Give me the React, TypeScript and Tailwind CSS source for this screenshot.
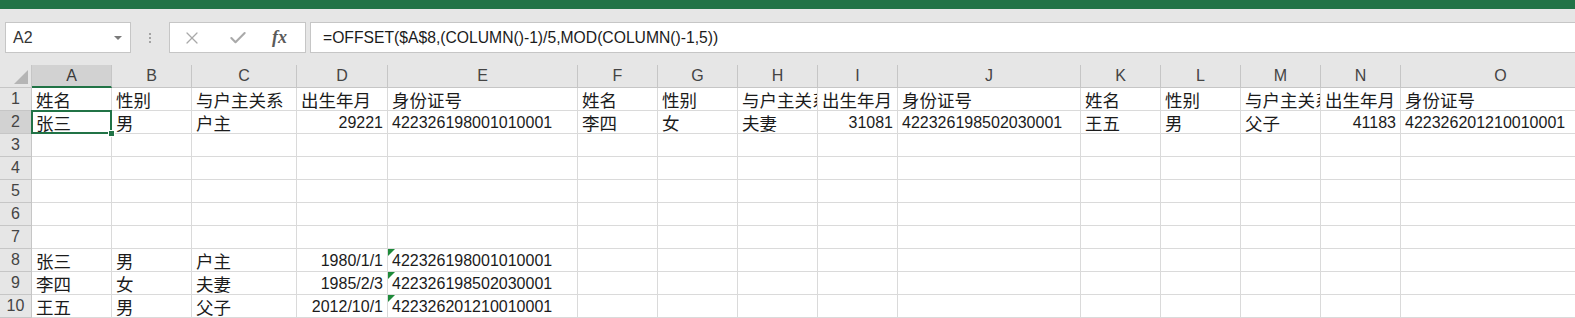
import { X, Check } from 'lucide-react';

const colNames = ['A', 'B', 'C', 'D', 'E', 'F', 'G', 'H', 'I', 'J', 'K', 'L', 'M', 'N', 'O'];

const head = ['姓名', '性别', '与户主关系', '出生年月', '身份证号'];

const rows: string[][] = [
    [...head, ...head, ...head],
    ['张三', '男', '户主', '29221', '422326198001010001', '李四', '女', '夫妻', '31081', '422326198502030001', '王五', '男', '父子', '41183', '422326201210010001'],
    [],
    [],
    [],
    [],
    [],
    ['张三', '男', '户主', '1980/1/1', '422326198001010001'],
    ['李四', '女', '夫妻', '1985/2/3', '422326198502030001'],
    ['王五', '男', '父子', '2012/10/1', '422326201210010001'],
];

// date / serial columns are right aligned
const rightCols = [3, 8, 13];

function Cell({ text, col, row }: { text: string; col: number; row: number }) {
    const isNum = /^[0-9/]+$/.test(text);
    const right = isNum && rightCols.includes(col);
    const selected = row === 1 && col === 0;
    const flag = row >= 7 && col === 4 && text !== '';
    return (
        <div
            className={`relative flex h-[23px] items-center border-r border-b border-[#dadada] bg-white pl-[4px] ${
                right ? 'justify-end pr-[4px]' : 'justify-start'
            } ${selected ? 'overflow-visible' : 'overflow-hidden'}`}
        >
            <span
                className={`whitespace-nowrap text-[#1b1b1b] ${
                    isNum
                        ? "font-['Liberation_Sans',sans-serif] text-[16px] leading-[23px]"
                        : "font-['Noto_Sans_CJK_SC',sans-serif] text-[17.5px] leading-[23px]"
                }`}
            >
                {text}
            </span>
            {flag && (
                <span className="absolute top-0 left-0 h-0 w-0 border-t-[7px] border-r-[7px] border-t-[#1e8a3a] border-r-transparent" />
            )}
            {selected && (
                <>
                    <span className="pointer-events-none absolute top-[-1px] left-[-1px] right-[-1px] bottom-[-1px] z-10 border-2 border-[#217346]" />
                    <span className="absolute right-[-4px] bottom-[-4px] z-20 h-[7px] w-[7px] border border-white bg-[#217346]" />
                </>
            )}
        </div>
    );
}

export default function App() {
    return (
        <div className="h-[318px] w-[1575px] overflow-hidden bg-white">
            <div className="h-[9px] bg-[#217346]" />
            <div className="flex h-[56px] items-start gap-0 bg-[#e6e6e6] pt-[13px]">
                <div className="ml-[5px] flex h-[31px] w-[126px] items-center justify-between border border-[#c6c6c6] bg-white pr-[8px] pl-[7px]">
                    <span className="font-['Liberation_Sans',sans-serif] text-[16px] text-[#333]">A2</span>
                    <span className="h-0 w-0 border-t-[4px] border-r-[4px] border-l-[4px] border-t-[#7a7a7a] border-r-transparent border-l-transparent" />
                </div>
                <div className="flex h-[31px] w-[38px] flex-col items-center justify-center gap-[2px]">
                    <span className="h-[2px] w-[2px] bg-[#a3a3a3]" />
                    <span className="h-[2px] w-[2px] bg-[#a3a3a3]" />
                    <span className="h-[2px] w-[2px] bg-[#a3a3a3]" />
                </div>
                <div className="flex h-[31px] w-[137px] items-center border border-[#c6c6c6] bg-white">
                    <X className="ml-[12px] h-[20px] w-[20px] text-[#a9a9a9]" strokeWidth={1.5} />
                    <Check className="ml-[26px] h-[20px] w-[20px] text-[#a9a9a9]" strokeWidth={2.5} />
                    <span className="ml-[24px] font-['Liberation_Serif',serif] text-[18px] font-bold italic text-[#5a5a5a]">fx</span>
                </div>
                <div className="ml-[4px] flex h-[31px] flex-1 items-center border-y border-l border-[#c6c6c6] bg-white pl-[12px]">
                    <span className="font-['Liberation_Sans',sans-serif] text-[15.7px] text-[#1b1b1b]">
                        =OFFSET($A$8,(COLUMN()-1)/5,MOD(COLUMN()-1,5))
                    </span>
                </div>
            </div>
            <div className="grid grid-cols-[32px_80px_80px_105px_91px_190px_80px_80px_80px_80px_183px_80px_80px_80px_80px_200px]">
                {/* corner */}
                <div className="relative h-[23px] border-r border-b border-[#c6c6c6] bg-[#e6e6e6]">
                    <svg className="absolute right-[3px] bottom-[3px]" width="14" height="14" viewBox="0 0 14 14">
                        <polygon points="14,0 14,14 0,14" fill="#b5b5b5" />
                    </svg>
                </div>
                {colNames.map((c, i) => (
                    <div
                        key={c}
                        className={`flex h-[23px] items-center justify-center border-r font-['Liberation_Sans',sans-serif] text-[16px] ${
                            i === 0
                                ? 'border-b-2 border-r-[#c6c6c6] border-b-[#217346] bg-[#d2d2d2] text-[#3a3a3a]'
                                : 'border-b border-[#c6c6c6] bg-[#e6e6e6] text-[#444]'
                        }`}
                    >
                        {c}
                    </div>
                ))}
                {rows.map((r, ri) => (
                    <Row key={ri} cells={r} row={ri} />
                ))}
            </div>
        </div>
    );
}

function Row({ cells, row }: { cells: string[]; row: number }) {
    return (
        <>
            <div
                className={`flex h-[23px] items-center justify-center border-r border-b border-[#c6c6c6] font-['Liberation_Sans',sans-serif] text-[16px] text-[#444] ${
                    row === 1 ? 'bg-[#d2d2d2]' : 'bg-[#e6e6e6]'
                }`}
            >
                {row + 1}
            </div>
            {colNames.map((_, ci) => (
                <Cell key={ci} text={cells[ci] ?? ''} col={ci} row={row} />
            ))}
        </>
    );
}
